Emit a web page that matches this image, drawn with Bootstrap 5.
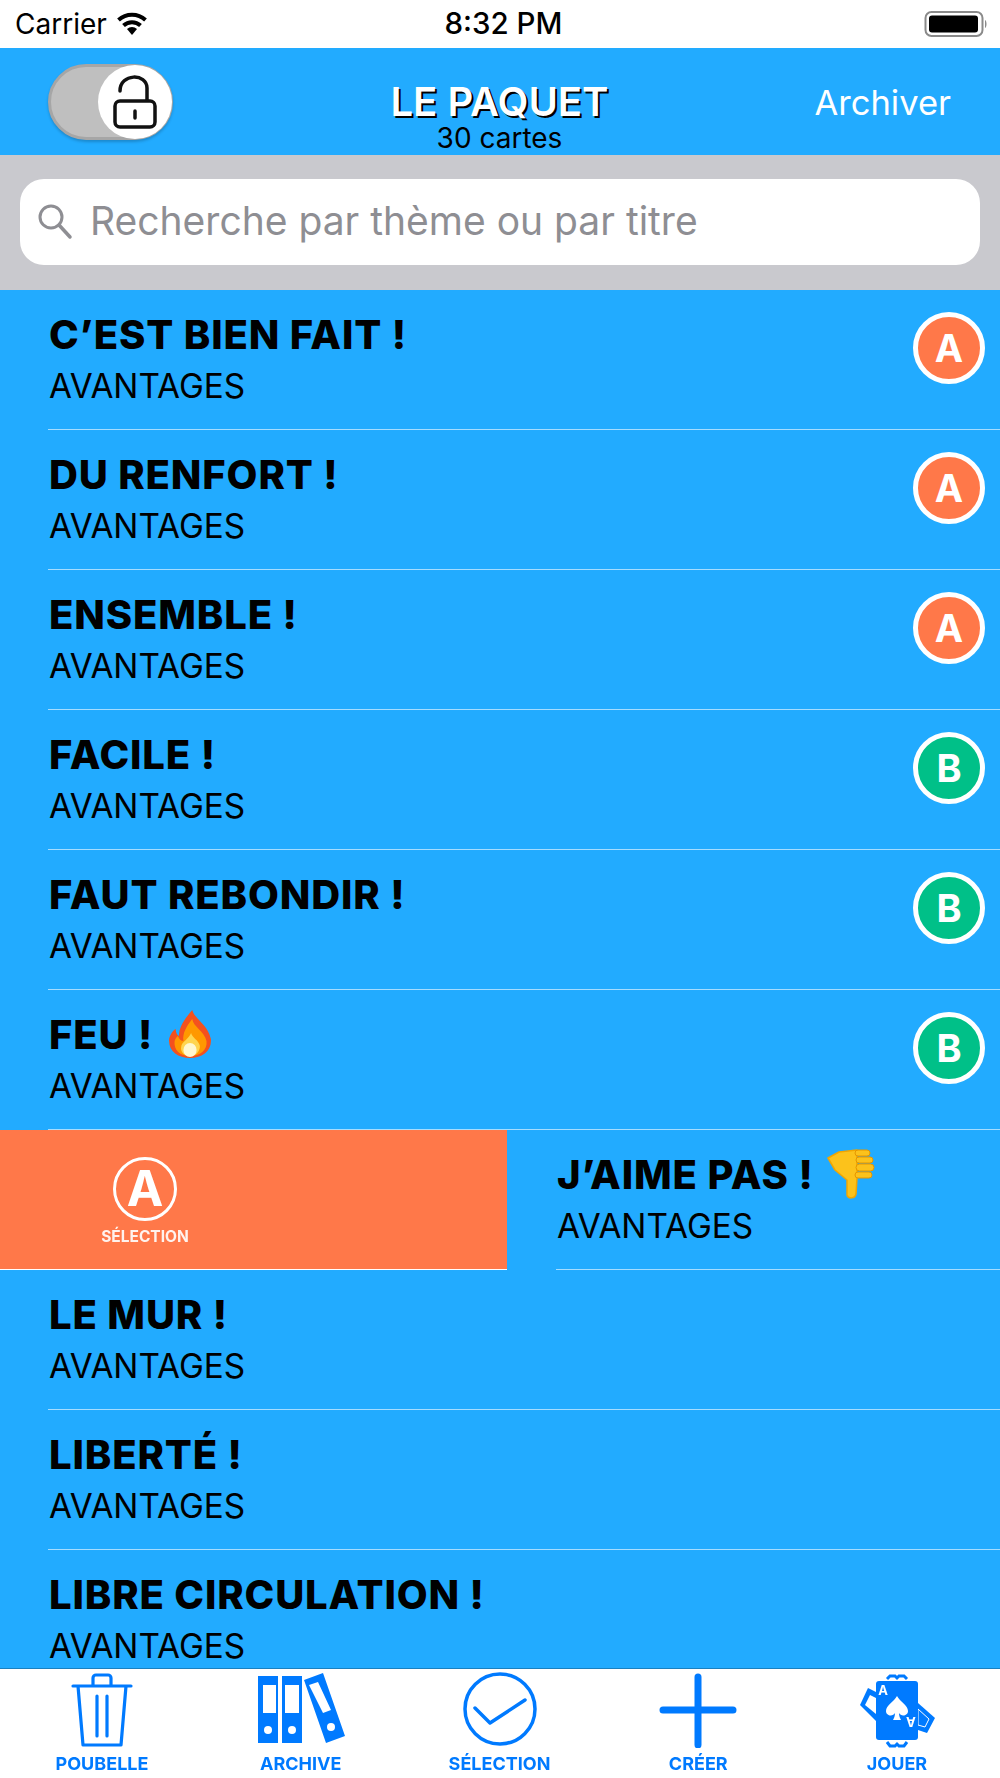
<!DOCTYPE html>
<html lang="fr">
<head>
  <meta charset="UTF-8">
  <meta name="viewport" content="width=device-width, initial-scale=1.0">
  <title>Le Paquet</title>
  <link href="https://cdn.jsdelivr.net/npm/bootstrap@5.3.0/dist/css/bootstrap.min.css" rel="stylesheet">
  <style>
    html, body { height: 100%; margin: 0; }
    body { background: #fff; font-family: Inter, "Liberation Sans", sans-serif; color: #000; overflow: hidden; }
    .phone { height: 1778px; }
    .status-bar { height: 48px; padding: 0 12px 0 15px; font-size: 28px; line-height: 1; background: #fff; }
    .status-side { width: 300px; }
    .status-time { font-size: 29.500px; font-weight: 500; margin-left: 4px; }
    .top-bar { height: 107px; background: #22abff; display: grid; grid-template-columns: 1fr auto 1fr; padding: 0 49px 0 48px; align-items: start; }
    .lock-toggle { width: 125px; height: 76px; margin-top: 16px; background: #bfbfbf; border: 3px solid #a6a6a6; border-radius: 38px; box-shadow: 0 2px 3px rgba(0,0,0,.2); }
    .lock-knob { width: 74px; height: 74px; margin: -2px -2px 0 0; border-radius: 50%; background: #fff; }
    .deck-title { font-size: 40px; line-height: 40px; font-weight: 600; color: #fff; text-shadow: 2px 2px 0 #000; margin-top: 34px; }
    .deck-count { font-size: 28px; line-height: 28px; margin-top: 2px; }
    .archive-link { font-size: 34.500px; line-height: 42px; color: #fff; margin-top: 34px; text-decoration: none; }
    .search-wrap { height: 135px; background: #c9c9ce; padding: 24px 20px 0; }
    .search-box { height: 86px; background: #fff; border-radius: 24px; padding-left: 16px; padding-bottom: 2px; gap: 16px; font-size: 39px; color: #8e8e93; }
    .deck-list { height: 1378px; background: #22abff; overflow: hidden; }
    .deck-row { height: 140px; padding-left: 48px; }
    .row-inner { height: 140px; border-bottom: 1px solid rgba(255,255,255,.6); padding: 20px 15px 0 1px; }
    .row-title { font-size: 40px; line-height: 50px; height: 50px; font-weight: 800; letter-spacing: .85px; white-space: nowrap; }
    .row-sub { font-size: 33.300px; line-height: 38px; margin-top: 7px; }
    .grade-dot { width: 72px; height: 72px; margin-top: 2px; border: 5px solid #fff; border-radius: 50%; color: #fff; font-size: 38px; font-weight: 700; line-height: 1; }
    .grade-a { background: #ff7849; }
    .grade-b { background: #00c088; }
    .swipe-row { height: 140px; }
    .swipe-action { width: 507px; height: 140px; background: #ff7849; border-bottom: 1px solid #fff; color: #fff; padding: 26px 0 0 55px; }
    .swipe-stack { width: 180px; }
    .swipe-icon { filter: blur(.6px); }
    .swipe-label { font-size: 15.500px; font-weight: 700; line-height: 18px; margin-top: 6px; filter: blur(.7px); color: rgba(255,255,255,.9); }
    .swipe-content { padding-left: 49px; flex: 1; overflow: hidden; }
    .tab-bar { height: 110px; background: #fff; border-top: 1px solid #1a80c0; padding: 3px 13px 0 12px; }
    .tab-item { width: 180px; color: #007aff; font-size: 18px; font-weight: 700; line-height: 20px; filter: blur(.6px); }
    .tab-item svg { display: block; margin-bottom: 6px; }
    .inline-emoji { vertical-align: middle; margin: -14px 0 -6px 13px; }
    .flame-emoji { margin-left: 15px; }
  </style>
</head>
<body>
  <div class="phone d-flex flex-column">
    <div class="status-bar d-flex align-items-center justify-content-between">
      <div class="status-side d-flex align-items-center gap-2">
        <span>Carrier</span>
        <svg width="34" height="24" viewBox="0 0 34 24"><path d="M17 23l-5-6a7.5 7.5 0 0 1 10 0z" fill="#000"/><path d="M8.5 13.5a12.5 12.5 0 0 1 17 0M3.500 8a20 20 0 0 1 27 0" fill="none" stroke="#000" stroke-width="4"/></svg>
      </div>
      <span class="status-time">8:32 PM</span>
      <div class="status-side d-flex justify-content-end">
        <svg width="64" height="28" viewBox="0 0 64 28"><rect x="1.500" y="2" width="57" height="24" rx="6" fill="#fff" stroke="#8a8a8a" stroke-width="2"/><rect x="5" y="5.500" width="49" height="17" rx="3" fill="#000"/><path d="M61 10c2 1 2 7 0 8z" fill="#8a8a8a"/></svg>
      </div>
    </div>

    <div class="top-bar">
      <div class="lock-toggle d-flex justify-content-end">
        <div class="lock-knob d-flex align-items-center justify-content-center">
          <svg width="46" height="56" viewBox="0 0 46 56"><path d="M8 17c0-18 27-18 27-3v12" fill="none" stroke="#111" stroke-width="3.500" stroke-linecap="round"/><rect x="3" y="27" width="40" height="26" rx="5" fill="#fff" stroke="#111" stroke-width="3.500"/><path d="M23 37v7" stroke="#111" stroke-width="3.500" stroke-linecap="round"/></svg>
        </div>
      </div>
      <div class="text-center">
        <div class="deck-title">LE PAQUET</div>
        <div class="deck-count">30 cartes</div>
      </div>
      <a class="archive-link text-end" href="#">Archiver</a>
    </div>

    <div class="search-wrap">
      <div class="search-box d-flex align-items-center">
        <svg width="38" height="38" viewBox="0 0 38 38"><circle cx="15" cy="15" r="11" fill="none" stroke="#8e8e93" stroke-width="3"/><path d="M23 23l11 12" stroke="#8e8e93" stroke-width="3.500" stroke-linecap="round"/></svg>
        <span>Recherche par thème ou par titre</span>
      </div>
    </div>

    <div class="deck-list" id="deckList"></div>

    <nav class="tab-bar d-flex justify-content-between">
      <div class="tab-item d-flex flex-column align-items-center">
        <svg width="80" height="76" viewBox="0 0 80 76" fill="none" stroke="#007aff" stroke-width="3.200" stroke-linecap="round" stroke-linejoin="round"><path d="M11 14h58M31 14V6a3 3 0 0 1 3-3h12a3 3 0 0 1 3 3v8M16 14l5 59h38l5-59M35 24v40M45 24v40"/></svg>
        POUBELLE
      </div>
      <div class="tab-item d-flex flex-column align-items-center">
        <svg width="90" height="76" viewBox="0 0 90 76"><path fill="#007aff" fill-rule="evenodd" d="M2 4h20v67H2zM7 13v28h13V13zM26 4h20v67H26zM29 13v28h14V13zM48 8l19-7 22 63-19 7zM53 13l14 28 8-3-13-28z"/><circle cx="12" cy="58" r="4" fill="#fff"/><circle cx="36" cy="58" r="4" fill="#fff"/><circle cx="75" cy="55" r="4" fill="#fff"/></svg>
        ARCHIVE
      </div>
      <div class="tab-item d-flex flex-column align-items-center">
        <svg width="80" height="76" viewBox="0 0 80 76" fill="none" stroke="#007aff" stroke-linecap="round" stroke-linejoin="round"><circle cx="40" cy="37" r="35" stroke-width="3.500"/><path d="M15 36l15 15 35-23" stroke-width="3.500"/></svg>
        SÉLECTION
      </div>
      <div class="tab-item d-flex flex-column align-items-center">
        <svg width="80" height="76" viewBox="0 0 80 76" stroke="#007aff" stroke-width="7" stroke-linecap="round"><path d="M5 38h70M40 5v68"/></svg>
        CRÉER
      </div>
      <div class="tab-item d-flex flex-column align-items-center">
        <svg width="80" height="76" viewBox="0 0 80 76">
          <path d="M3 33l8-17 8 4v29z" fill="#007aff"/>
          <path d="M8 33l5-10 6 3v16z" fill="#fff"/>
          <path d="M61 31l17 15-8 15-9-3z" fill="#007aff"/>
          <path d="M61 37l11 10-4 8-7-2z" fill="#007aff" stroke="#fff" stroke-width="1"/>
          <path d="M30 7l3-3h5l2 2 2-2h5l3 3M30 70l3 4h5l2-2 2 2h5l3-4" fill="none" stroke="#007aff" stroke-width="3"/>
          <rect x="19" y="9" width="42" height="59" rx="3" fill="#007aff"/>
          <text x="26" y="23" font-size="13" font-weight="700" fill="#fff" font-family="Inter, sans-serif" text-anchor="middle">A</text>
          <text x="54" y="54" font-size="13" font-weight="700" fill="#fff" font-family="Inter, sans-serif" text-anchor="middle" transform="rotate(180 54 49.500)">A</text>
          <path d="M40 24c3 6 11 9 11 15 0 5-7 6-9 2 0 3 1 5 2 7h-8c1-2 2-4 2-7-2 4-9 3-9-2 0-6 8-9 11-15z" fill="#fff"/>
        </svg>
        JOUER
      </div>
    </nav>
  </div>

  <script src="https://cdn.jsdelivr.net/npm/bootstrap@5.3.0/dist/js/bootstrap.bundle.min.js"></script>
  <script>
    const flame = '<svg class="inline-emoji flame-emoji" width="44" height="50" viewBox="0 0 40 50" preserveAspectRatio="none"><path d="M22 1c2 9 14 14 17 29 1 12-8 19-19 19S0 42 1 30c1-5 4-9 6-10 0 3 1 6 3 7C10 17 16 9 22 1z" fill="#f4511e"/><path d="M22 10c1 8 11 12 13 22 1 9-6 15-15 15S5 41 6 32c1-3 2-4 3-5 1 3 3 5 5 5-1-8 3-15 8-22z" fill="#ff9800"/><path d="M21 24c1 5 7 7 8 13 0 6-4 10-9 10s-9-4-8-9c0-5 7-8 9-14z" fill="#ffd54f"/><ellipse cx="20" cy="41" rx="6" ry="7" fill="#fff8d0"/></svg>';
    const thumb = '<svg class="inline-emoji" width="48" height="50" viewBox="0 0 48 50"><path d="M1 9L12 3 30 1v28l-1 16c-1 5-8 5-9 1V31L8 21z" fill="#fcc21b" stroke="#f2a600" stroke-width="1.500" stroke-linejoin="round"/><g fill="#fcc21b" stroke="#e59600" stroke-width="1"><rect x="28" y="1" width="15" height="6" rx="3"/><rect x="29" y="8" width="17" height="6" rx="3"/><rect x="29" y="15" width="18" height="7" rx="3.500"/><rect x="28" y="23" width="17" height="6" rx="3"/></g></svg>';

    const cards = [
      { title: 'C’EST BIEN FAIT !', grade: 'A' },
      { title: 'DU RENFORT !', grade: 'A' },
      { title: 'ENSEMBLE !', grade: 'A' },
      { title: 'FACILE !', grade: 'B' },
      { title: 'FAUT REBONDIR !', grade: 'B' },
      { title: 'FEU !' + flame, grade: 'B' },
      { title: 'J’AIME PAS !' + thumb, swiped: true },
      { title: 'LE MUR !' },
      { title: 'LIBERTÉ !' },
      { title: 'LIBRE CIRCULATION !' }
    ];

    function rowBody(card) {
      const dot = card.grade
        ? `<div class="grade-dot grade-${card.grade.toLowerCase()} d-flex align-items-center justify-content-center">${card.grade}</div>`
        : '';
      return `<div class="row-inner d-flex justify-content-between">
        <div><div class="row-title">${card.title}</div><div class="row-sub">AVANTAGES</div></div>${dot}
      </div>`;
    }

    const selectAction = `<div class="swipe-action">
      <div class="swipe-stack d-flex flex-column align-items-center">
        <svg class="swipe-icon" width="66" height="66" viewBox="0 0 66 66"><circle cx="33" cy="33" r="30.500" fill="none" stroke="#fff" stroke-width="3"/><text x="33" y="50" font-size="49" font-weight="700" fill="#fff" font-family="Inter, sans-serif" text-anchor="middle">A</text></svg>
        <div class="swipe-label">SÉLECTION</div>
      </div>
    </div>`;

    document.getElementById('deckList').innerHTML = cards.map((card) => {
      if (card.swiped) {
        return `<div class="swipe-row d-flex">${selectAction}<div class="swipe-content">${rowBody(card)}</div></div>`;
      }
      return `<div class="deck-row">${rowBody(card)}</div>`;
    }).join('');
  </script>
</body>
</html>
